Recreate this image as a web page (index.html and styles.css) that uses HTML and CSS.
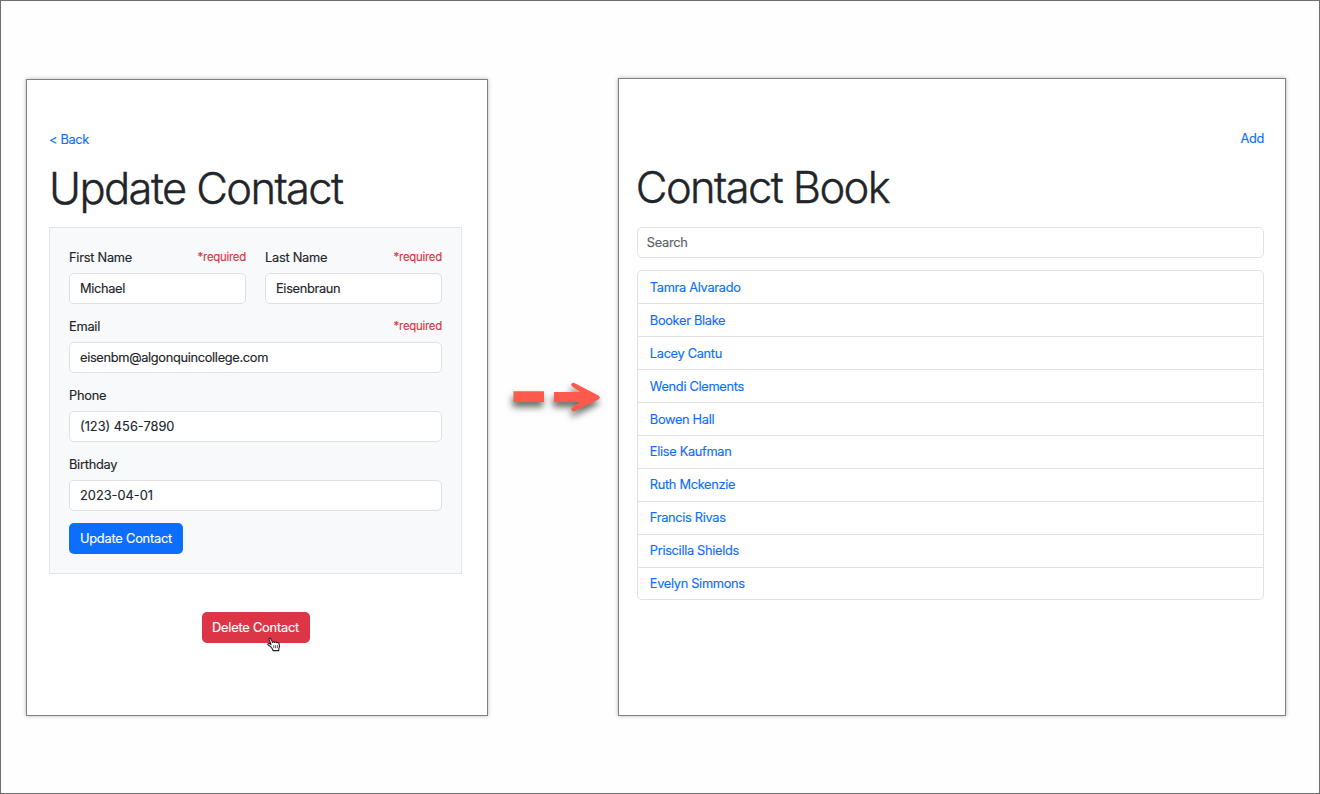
FILE: index.html
```html
<!DOCTYPE html>
<html lang="en">
<head>
<meta charset="utf-8">
<title>Contact Book</title>
<link rel="stylesheet" href="styles.css">
</head>
<body>
<main class="stage">
  <section class="panel panel-form">
    <nav class="nav"><a class="link" href="#">&lt; Back</a></nav>
    <h1 class="title title-update"><span>Update Contact</span></h1>
    <form class="form">
      <div class="row">
        <div class="field">
          <div class="label-row"><label>First Name</label><span class="required">*required</span></div>
          <div class="input"><span>Michael</span></div>
        </div>
        <div class="field">
          <div class="label-row"><label>Last Name</label><span class="required">*required</span></div>
          <div class="input"><span>Eisenbraun</span></div>
        </div>
      </div>
      <div class="field">
        <div class="label-row"><label>Email</label><span class="required">*required</span></div>
        <div class="input"><span>eisenbm@algonquincollege.com</span></div>
      </div>
      <div class="field">
        <div class="label-row"><label>Phone</label></div>
        <div class="input"><span class="digits">(123) 456-7890</span></div>
      </div>
      <div class="field">
        <div class="label-row"><label>Birthday</label></div>
        <div class="input"><span class="digits">2023-04-01</span></div>
      </div>
      <button class="btn btn-primary" type="button">Update Contact</button>
    </form>
    <div class="delete-row">
      <div class="delete-wrap">
        <button class="btn btn-danger" type="button">Delete Contact</button>
        <svg class="cursor" width="14" height="15" viewBox="0 0 14 15">
          <path d="M3.8 9.7 1.2 8C.2 7.1 1.1 6.1 2.3 6.6L4.1 7.6 2.1 2.4C1.7 1.1 3 .6 3.7 1.7L5.7 5.5C6.2 4.6 7.3 4.6 7.7 5.4 8.4 4.7 9.4 4.9 9.8 5.8 10.8 5.2 11.9 5.7 12.1 6.8L12.5 9.4 11.8 11.8V13.6H6L5.6 12.2Z" fill="#fff" stroke="#222" stroke-width="1.1" stroke-linejoin="round"/>
          <path d="M6.8 8.2v3M8.6 8.2v3M10.4 8.2v3" stroke="#333" stroke-width=".8"/>
        </svg>
      </div>
    </div>
  </section>
  <div class="arrow">
    <svg width="96" height="50" viewBox="505 375 96 50">
      <path d="M513.5 391.3H544V402H513.5ZM554 391.9H580L572.2 386.6C569.9 384.4 572.3 381.9 574.8 383.2L598.4 395.4C600.3 396.6 600.3 398.4 598.4 399.6L574.8 410.9C571.9 412.2 570.2 409.4 572.1 407.7L580 402H554Z" fill="#fd594d"/>
      <path d="M584 395.7 585.6 397.2 584 398.5Z" fill="#b86a65"/>
    </svg>
  </div>
  <section class="panel panel-list">
    <nav class="nav nav-right"><a class="link" href="#">Add</a></nav>
    <h1 class="title title-book"><span>Contact Book</span></h1>
    <div class="input search">Search</div>
    <ul class="list">
      <li><a class="link" href="#">Tamra Alvarado</a></li>
      <li><a class="link" href="#">Booker Blake</a></li>
      <li><a class="link" href="#">Lacey Cantu</a></li>
      <li><a class="link" href="#">Wendi Clements</a></li>
      <li><a class="link" href="#">Bowen Hall</a></li>
      <li><a class="link" href="#">Elise Kaufman</a></li>
      <li><a class="link" href="#">Ruth Mckenzie</a></li>
      <li><a class="link" href="#">Francis Rivas</a></li>
      <li><a class="link" href="#">Priscilla Shields</a></li>
      <li><a class="link" href="#">Evelyn Simmons</a></li>
    </ul>
  </section>
</main>
</body>
</html>
```
FILE: styles.css
```css
* { box-sizing: border-box; }
body {
  margin: 0;
  font-family: Inter, "Liberation Sans", sans-serif;
  font-size: 12.8px;
  line-height: 20px;
  letter-spacing: -0.32px;
  color: #212529;
  background: #fefefe;
  -webkit-text-stroke: .15px;
}
.stage {
  width: 1320px;
  height: 794px;
  border: 1px solid #6e6e6e;
  padding: 77px 33px 0 25px;
  display: flex;
  align-items: flex-start;
}
.panel {
  border: 1px solid #808080;
  background: #fff;
  box-shadow: 0 0 4px rgba(0, 0, 0, .28);
}
.panel-form {
  width: 462px;
  height: 637px;
  margin-top: 1px;
  padding: 48px 26px 0 22px;
}
.panel-list {
  width: 669px;
  height: 638px;
  padding: 48px 21px 0 18px;
}
.nav { height: 22px; display: flex; align-items: center; padding-top: 2px; }
.nav-right { justify-content: flex-end; }
.link { color: #0d6efd; text-decoration: none; }
.title {
  margin: 9px 0 0 -1px;
  height: 68px;
  font-size: 43.5px;
  font-weight: 300;
  line-height: 58px;
  letter-spacing: -1.6px;
  white-space: nowrap;
  -webkit-text-stroke: .4px;
}
.title-update { margin-left: 0; }
.title-book { height: 69px; }
.form {
  width: 413px;
  height: 347px;
  background: #f8f9fa;
  border: 1px solid #e2e6ea;
  padding: 19px;
}
.row { display: flex; gap: 19px; }
.row .field { flex: 1; }
.field { height: 69px; }
.label-row {
  height: 26px;
  display: flex;
  justify-content: space-between;
}
.label-row label { line-height: 22px; letter-spacing: -0.25px; }
.required { color: #dc3545; font-size: 11.4px; line-height: 20px; letter-spacing: -0.25px; }
.input {
  height: 31px;
  display: flex;
  align-items: center;
  padding: 0 10px;
  border: 1px solid #dee2e6;
  border-radius: 5px;
  background: #fff;
}
.digits { letter-spacing: 0; }
.btn {
  height: 31px;
  border: 0;
  border-radius: 5px;
  padding: 0;
  color: #fff;
  font: inherit;
  letter-spacing: -0.2px;
}
.btn-primary { display: block; width: 114px; background: #0d6efd; }
.btn-danger { display: block; width: 108px; background: #dc3545; }
.delete-row { display: flex; justify-content: center; width: 413px; margin-top: 38px; }
.delete-wrap { position: relative; }
.cursor { position: absolute; left: 65px; top: 25px; }
.arrow { width: 130px; padding: 297px 0 0 17px; }
.arrow svg { display: block; overflow: visible; filter: drop-shadow(-1px 5px 3.5px rgba(0, 0, 0, .6)); }
.search { color: #595f64; letter-spacing: -0.3px; padding-left: 9px; }
.list {
  list-style: none;
  margin: 12px 0 0;
  padding: 0;
  height: 330px;
  border: 1px solid #dee2e6;
  border-radius: 5px;
  display: grid;
  grid-template-rows: repeat(9, 33px) 31px;
}
.list li {
  display: flex;
  align-items: center;
  padding-left: 12px;
  border-bottom: 1px solid #dee2e6;
}
.list li:nth-child(-n+5) { padding-top: 2px; }
.list li:last-child { border-bottom: 0; }
```
